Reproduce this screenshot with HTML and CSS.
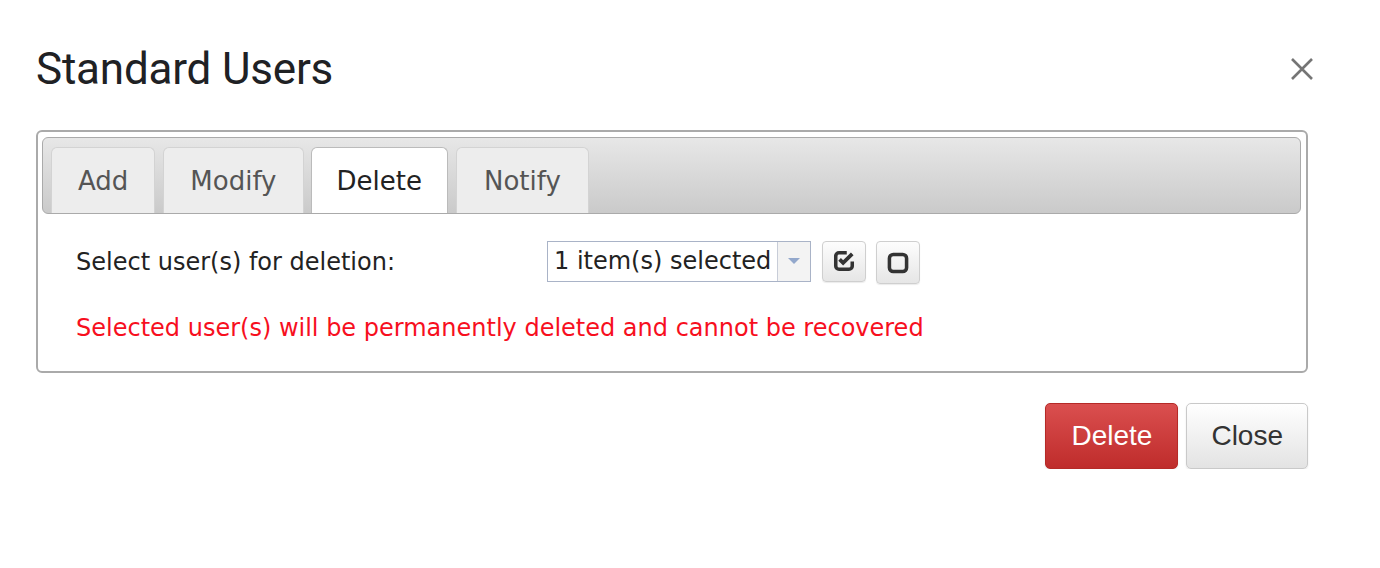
FILE: index.html
```html
<!DOCTYPE html>
<html>
<head>
	<meta charset="utf-8">
	<title>Standard Users</title>
	<link rel="stylesheet" href="styles.css">
</head>
<body>
	<div class="dlg">
		<div class="dlg-head">
			<h1 class="dlg-title">Standard Users</h1>
			<span class="dlg-close">
				<svg width="24" height="24" viewBox="0 0 24 24"><path d="M2 2L22 22M22 2L2 22" stroke="#757575" stroke-width="2.6" fill="none"/></svg>
			</span>
		</div>

		<div class="panel">
			<ul class="tabs">
				<li>Add</li>
				<li>Modify</li>
				<li class="on">Delete</li>
				<li>Notify</li>
			</ul>
			<div class="panel-body">
				<div class="row">
					<label class="lbl">Select user(s) for deletion:</label>
					<div class="msel">
						<span class="msel-text">1 item(s) selected</span>
						<span class="msel-arrow"><i></i></span>
					</div>
					<button class="ibtn" title="Select all">
						<svg width="22" height="22" viewBox="0 0 20 20"><path d="M12.5 2.5H5.5a3 3 0 0 0-3 3v9a3 3 0 0 0 3 3h9a3 3 0 0 0 3-3V10.5" stroke="#333" stroke-width="3.2" fill="none"/><path d="M6 8.5l3.2 3.2L17.5 3.5" stroke="#333" stroke-width="3.4" fill="none"/></svg>
					</button>
					<button class="ibtn tall" title="Select none">
						<svg width="22" height="22" viewBox="0 0 20 20"><rect x="2.2" y="2.2" width="15.6" height="15.6" rx="3.5" stroke="#333" stroke-width="3.2" fill="none"/></svg>
					</button>
				</div>
				<p class="warn">Selected user(s) will be permanently deleted and cannot be recovered</p>
			</div>
		</div>

		<div class="dlg-foot">
			<button class="btn btn-red">Delete</button>
			<button class="btn">Close</button>
		</div>
	</div>
</body>
</html>
```

FILE: styles.css
```css
* {margin: 0; padding: 0; box-sizing: border-box;}
body {background: #fff; font-family: "DejaVu Sans", Verdana, sans-serif; color: #222;}

.dlg {width: 1380px; padding: 0 72px 0 36px;}
.dlg-head {display: flex; justify-content: space-between; align-items: center; height: 130px; padding-top: 8px;}
.dlg-title {font-family: Roboto, "Noto Sans", sans-serif; font-weight: 400; font-size: 44px; color: #202124; letter-spacing: -0.2px;}
.dlg-close {display: block; width: 24px; height: 24px; margin-right: -6px;}

.panel {border: 2px solid #aaa; border-radius: 6px; padding: 5px 5px 0 4px;}
.tabs {list-style: none; display: flex; gap: 8px; height: 77px; padding: 9px 0 0 8px; border: 1px solid #aaa; border-radius: 6px; background: linear-gradient(#e7e7e7, #cacaca);}
.tabs li {height: 66px; margin-bottom: -1px; padding: 0 26px; font-size: 26px; line-height: 66px; color: #555; background: #ededed; border: 1px solid #d3d3d3; border-bottom: 0; border-radius: 6px 6px 0 0;}
.tabs li.on {padding: 0 25px; margin-left: -1px; background: #fff; color: #222; border-color: #bbb;}
.tabs li:last-child {padding: 0 27px;}

.panel-body {padding: 25px 0 29px 34px;}
.row {display: flex; align-items: center; height: 44px;}
.lbl {width: 471px; font-size: 24px; color: #222; padding-top: 2px;}
.msel {display: flex; width: 264px; height: 41px; border: 1px solid #a9b3c7;}
.msel-text {flex: 1; font-size: 24px; line-height: 39px; padding-left: 6px; color: #222; white-space: nowrap;}
.msel-arrow {display: flex; align-items: center; justify-content: center; width: 33px; background: #f3f3f3; border-left: 1px solid #c8cdd8;}
.msel-arrow i {width: 0; height: 0; border-left: 6px solid transparent; border-right: 6px solid transparent; border-top: 6px solid #93a8cc;}
.ibtn {display: flex; align-items: center; justify-content: center; width: 44px; height: 41px; margin-left: 11px; border: 1px solid #cfcfcf; border-radius: 4px; background: linear-gradient(#fdfdfd, #e6e6e6); box-shadow: 0 1px 1px rgba(0,0,0,0.08);}
.ibtn.tall {height: 43px; margin-left: 10px; margin-top: 3px;}
.warn {margin-top: 31px; font-size: 24px; color: #f70f1e; line-height: 28px;}

.dlg-foot {display: flex; justify-content: flex-end; gap: 8px; margin-top: 30px;}
.btn {height: 66px; padding: 0 24px; font-family: "Liberation Sans", Arial, sans-serif; font-size: 28px; color: #333; border: 1px solid #c9c9c9; border-radius: 5px; background: linear-gradient(#fff, #e3e3e3); box-shadow: 0 1px 2px rgba(0,0,0,0.1);}
.btn-red {padding: 0 25px; color: #fff; border-color: #b52a27; background: linear-gradient(#da4f4f, #bf2c2b);}
```
